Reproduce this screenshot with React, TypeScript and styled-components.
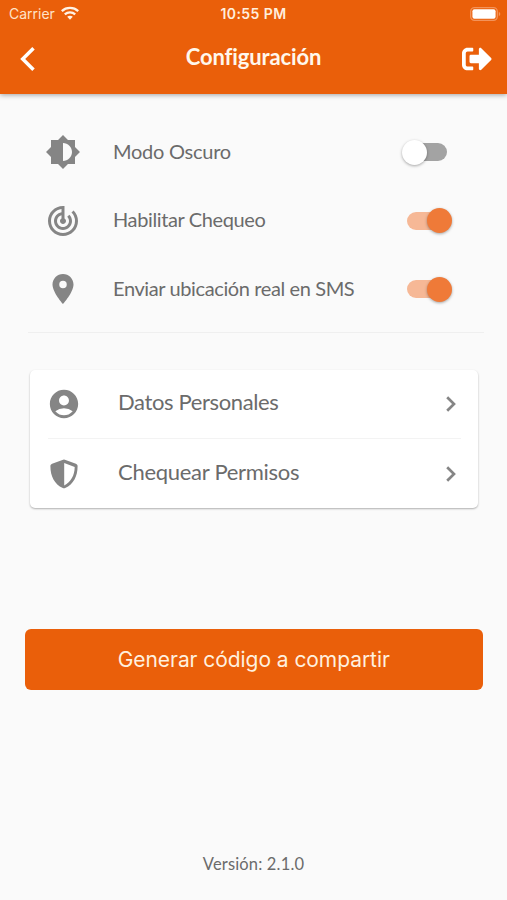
import React from 'react';
import styled, { createGlobalStyle } from 'styled-components';
import { FaSignOutAlt } from 'react-icons/fa';
import {
  MdAccountCircle,
  MdBrightnessMedium,
  MdPlace,
  MdTrackChanges,
} from 'react-icons/md';

const GlobalStyle = createGlobalStyle`
  * { box-sizing: border-box; }
  body { margin: 0; background: #fafafa; }
`;

const Screen = styled.div`
  width: 507px;
  height: 900px;
  display: flex;
  flex-direction: column;
  overflow: hidden;
  background: #fafafa;
  color: #6b6b6b;
  font-family: Lato, sans-serif;
`;

const Header = styled.header`
  height: 94px;
  flex: none;
  background: #ea5f0a;
  color: #fff7ec;
  box-shadow: 0 1px 5px rgba(0, 0, 0, 0.36);
`;

const StatusBar = styled.div`
  height: 28px;
  padding: 0 6px 0 9px;
  display: grid;
  grid-template-columns: 1fr auto 1fr;
  align-items: center;
  font: 400 14px/28px Inter, sans-serif;
`;

const Carrier = styled.div`
  display: flex;
  align-items: center;
  gap: 6px;
  color: #ffe3c8;

  svg {
    margin-top: -2px;
  }
`;

const Clock = styled.div`
  margin-right: 3px;
  font-weight: 600;
  font-size: 14px;
  letter-spacing: 0.4px;
  color: #ffeedd;
`;

const BatteryIcon = styled.svg`
  justify-self: end;
  margin-top: -1px;
`;

const NavBar = styled.div`
  height: 62px;
  padding: 0 15px 0 18px;
  display: grid;
  grid-template-columns: 1fr auto 1fr;
  align-items: center;
`;

const NavButton = styled.button<{ $end?: boolean }>`
  justify-self: ${(p) => (p.$end ? 'end' : 'start')};
  display: flex;
  padding: 0;
  border: 0;
  background: none;
  color: #fff;
`;

const Title = styled.h1`
  margin: 0 3px 0 0;
  padding-bottom: 4px;
  font-size: 22px;
  line-height: 28px;
  font-weight: 700;
  letter-spacing: -0.12px;
`;

const Settings = styled.section`
  margin: 24px 23px 0 28px;
  height: 215px;
  flex: none;
  border-bottom: 1px solid #efefef;
`;

const SettingRow = styled.div`
  height: 68.5px;
  padding: 0 32px 0 17px;
  display: flex;
  align-items: center;
`;

const IconSlot = styled.span<{ $gap: number }>`
  width: 36px;
  margin-right: ${(p) => p.$gap}px;
  display: flex;
  justify-content: center;
  color: #858585;
`;

const Label = styled.span<{ $size: number; $spacing: number; $lift: number }>`
  flex: 1;
  padding-bottom: ${(p) => p.$lift}px;
  white-space: nowrap;
  font-size: ${(p) => p.$size}px;
  letter-spacing: ${(p) => p.$spacing}px;
`;

const Track = styled.button<{ $on: boolean }>`
  width: 41px;
  height: 18px;
  margin-right: ${(p) => (p.$on ? 4 : 5)}px;
  padding: 0;
  border: 0;
  border-radius: 9px;
  display: flex;
  align-items: center;
  justify-content: ${(p) => (p.$on ? 'flex-end' : 'flex-start')};
  background: ${(p) => (p.$on ? '#f6b896' : '#a3a3a3')};
`;

const Thumb = styled.span<{ $on: boolean }>`
  flex: none;
  width: 25px;
  height: 25px;
  margin: ${(p) => (p.$on ? '0 -4px 0 0' : '0 0 0 -4px')};
  border-radius: 50%;
  background: ${(p) => (p.$on ? '#ef7a38' : '#fff')};
  box-shadow: 0 1px 3px rgba(0, 0, 0, 0.34);
`;

const Card = styled.section`
  margin: 37px 29px 0 30px;
  height: 138px;
  flex: none;
  border-radius: 5px;
  background: #fff;
  box-shadow: 0 1px 2px rgba(0, 0, 0, 0.3);
`;

const CardRow = styled.div`
  height: 68px;
  margin: 0 17px 0 18px;
  padding-right: 5px;
  display: flex;
  align-items: center;

  & + & {
    height: 70px;
    border-top: 1px solid #f3f3f3;
  }

  > ${IconSlot} {
    margin-left: -2px;
  }
`;

const ShareButton = styled.button`
  margin: 121px 24.5px 0 25px;
  height: 61px;
  flex: none;
  padding: 1px 0 0;
  border: 0;
  border-radius: 6px;
  background: #ea5f0a;
  color: #fff0df;
  font: 400 21px/60px Inter, sans-serif;
  letter-spacing: -0.06px;
`;

const Version = styled.footer`
  margin-top: auto;
  padding-bottom: 26px;
  text-align: center;
  font-size: 16.5px;
  line-height: 20px;
  letter-spacing: 0.16px;
`;

const WifiIcon = () => (
  <svg width="18" height="14" viewBox="0 0 18 14" fill="none" stroke="#fff3e6" strokeWidth="2.3">
    <path d="M.8 5.1C5.3.9 12.7.9 17.2 5.1" />
    <path d="M3.8 8.4c3-2.7 7.4-2.7 10.4 0" />
    <path d="M6.2 10.8c1.6-1.5 4-1.5 5.6 0L9 13.8z" fill="#fff3e6" stroke="none" />
  </svg>
);

const ShieldHalfIcon = () => (
  <svg width="28" height="30" viewBox="0 0 28 30" fill="currentColor">
    <path
      fillRule="evenodd"
      d="M13.1.7a2.4 2.4 0 0 1 1.8 0l11 4.1c1.1.4 1.7 1.3 1.7 2.4C27.5 17.5 23.6 25 15.2 29a2.8 2.8 0 0 1-2.4 0C4.4 25 .5 17.5.4 7.2c0-1.1.6-2 1.7-2.4zM14.2 4v22.4c6.8-3.7 10.3-9.7 10.5-18.4z"
    />
  </svg>
);

const Chevron = () => (
  <svg width="10" height="16" viewBox="0 0 10 16" fill="none" stroke="#858585" strokeWidth="2.7">
    <path d="M1.2 1.2 8 8l-6.8 6.8" />
  </svg>
);

const toggles = [
  { label: 'Modo Oscuro', icon: <MdBrightnessMedium size={36} />, on: false, spacing: -0.26 },
  { label: 'Habilitar Chequeo', icon: <MdTrackChanges size={36} />, on: true, spacing: -0.38 },
  { label: 'Enviar ubicación real en SMS', icon: <MdPlace size={36} />, on: true, spacing: -0.39 },
];

const links = [
  { label: 'Datos Personales', icon: <MdAccountCircle size={34} />, spacing: -0.37 },
  { label: 'Chequear Permisos', icon: <ShieldHalfIcon />, spacing: -0.28 },
];

export default function App() {
  return (
    <>
      <GlobalStyle />
      <Screen>
        <Header>
          <StatusBar>
            <Carrier>
              Carrier
              <WifiIcon />
            </Carrier>
            <Clock>10:55 PM</Clock>
            <BatteryIcon width="31" height="14" viewBox="0 0 31 14">
              <rect x=".7" y=".7" width="26.6" height="12.6" rx="3.8" fill="none" stroke="#f3935a" strokeWidth="1.3" />
              <rect x="2.4" y="2.2" width="23.2" height="9.6" rx="2" fill="#fff" />
              <path d="M28.8 4.8c2 .8 2 3.6 0 4.4z" fill="#f3935a" />
            </BatteryIcon>
          </StatusBar>
          <NavBar>
            <NavButton aria-label="Volver">
              <svg width="20" height="26" viewBox="0 0 20 26" fill="none" stroke="#fff" strokeWidth="3.5">
                <path d="M15.5 2.2 4.7 13l10.8 10.8" />
              </svg>
            </NavButton>
            <Title>Configuración</Title>
            <NavButton $end aria-label="Salir">
              <FaSignOutAlt size={30} />
            </NavButton>
          </NavBar>
        </Header>
        <Settings>
          {toggles.map((t) => (
            <SettingRow key={t.label}>
              <IconSlot $gap={32}>{t.icon}</IconSlot>
              <Label $size={20} $spacing={t.spacing} $lift={3}>{t.label}</Label>
              <Track $on={t.on} role="switch" aria-checked={t.on}>
                <Thumb $on={t.on} />
              </Track>
            </SettingRow>
          ))}
        </Settings>
        <Card>
          {links.map((l) => (
            <CardRow key={l.label}>
              <IconSlot $gap={36}>{l.icon}</IconSlot>
              <Label $size={22} $spacing={l.spacing} $lift={5}>{l.label}</Label>
              <Chevron />
            </CardRow>
          ))}
        </Card>
        <ShareButton>Generar código a compartir</ShareButton>
        <Version>Versión: 2.1.0</Version>
      </Screen>
    </>
  );
}
